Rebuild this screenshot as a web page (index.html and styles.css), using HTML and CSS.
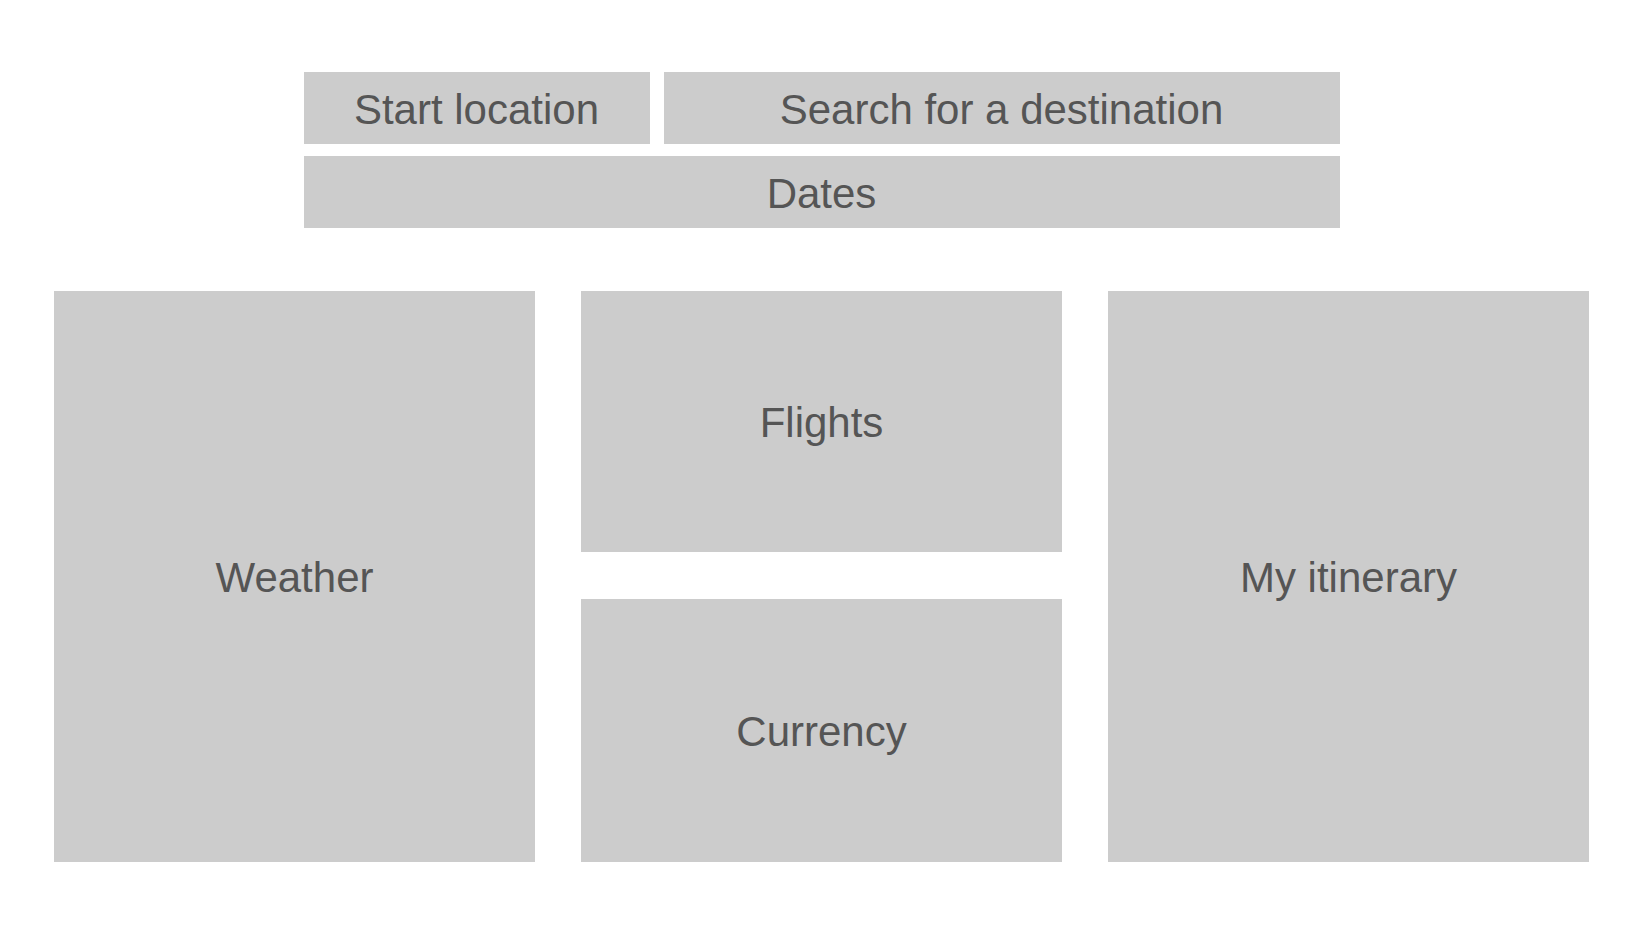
FILE: index.html
```html
<!DOCTYPE html>
<html lang="en">
<head>
<meta charset="utf-8">
<title>Trip planner</title>
<link rel="stylesheet" href="styles.css">
</head>
<body>
<div class="page">
  <div class="search">
    <div class="box start">Start location</div>
    <div class="box dest">Search for a destination</div>
    <div class="box dates">Dates</div>
  </div>
  <div class="panels">
    <div class="box weather">Weather</div>
    <div class="box flights">Flights</div>
    <div class="box currency">Currency</div>
    <div class="box itinerary">My itinerary</div>
  </div>
</div>
</body>
</html>
```

FILE: styles.css
```css
html, body {
  margin: 0;
  padding: 0;
  background: #ffffff;
}

.page {
  padding: 72px 44px 0 54px;
  font-family: "Liberation Sans", Arial, sans-serif;
  font-size: 42px;
  color: #555555;
}

.box {
  background: #cccccc;
  display: flex;
  align-items: center;
  justify-content: center;
  padding-top: 3px;
  box-sizing: border-box;
}

.search {
  width: 1036px;
  margin: 0 auto;
  display: grid;
  grid-template-columns: 346px 676px;
  grid-template-rows: 72px 72px;
  column-gap: 14px;
  row-gap: 12px;
}

.dates {
  grid-column: 1 / 3;
}

.panels {
  margin-top: 63px;
  display: grid;
  grid-template-columns: 481px 481px 481px;
  grid-template-rows: 261px 263px;
  column-gap: 46px;
  row-gap: 47px;
}

.weather {
  grid-column: 1;
  grid-row: 1 / 3;
}

.flights {
  grid-column: 2;
  grid-row: 1;
}

.currency {
  grid-column: 2;
  grid-row: 2;
}

.itinerary {
  grid-column: 3;
  grid-row: 1 / 3;
}
```
